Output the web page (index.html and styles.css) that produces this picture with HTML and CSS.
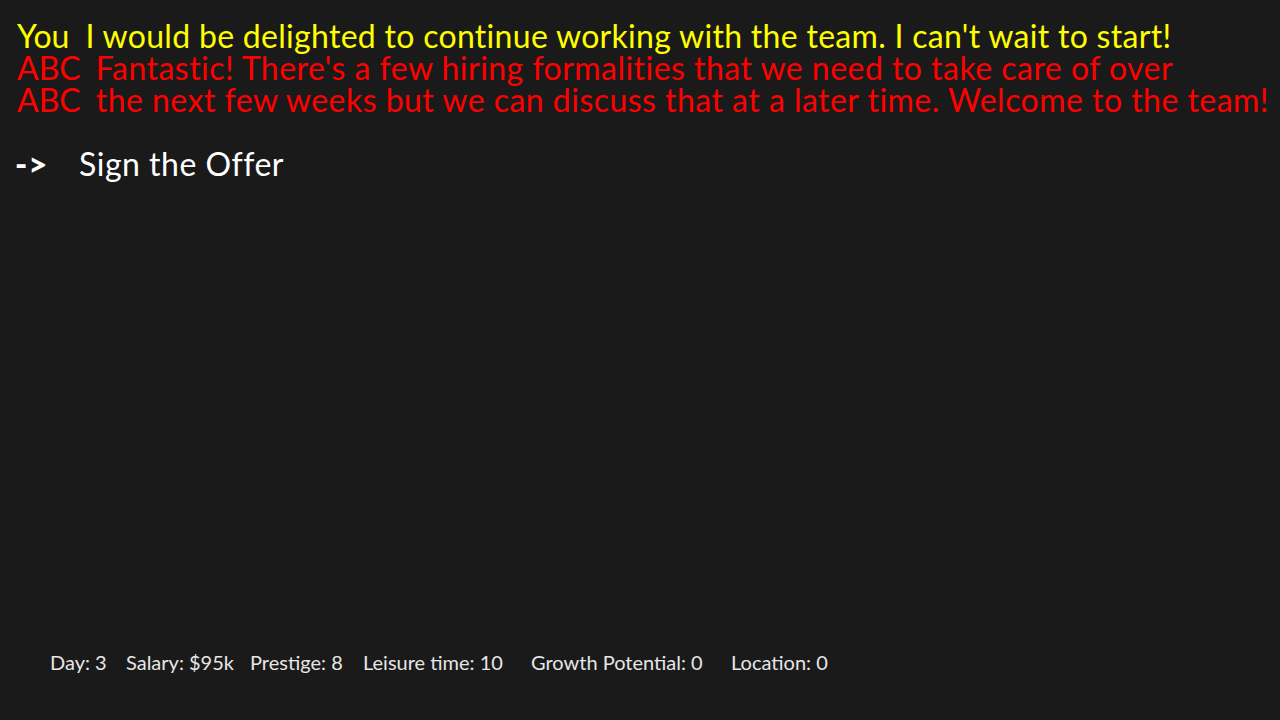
FILE: index.html
```html
<!DOCTYPE html>
<html>
<head>
<meta charset="utf-8">
<link rel="stylesheet" href="styles.css">
</head>
<body>
<div class="screen">
  <div class="dialog">
    <div class="line you"><span class="who">You</span><span class="msg">I would be delighted to continue working with the team. I can't wait to start!</span></div>
    <div class="line abc"><span class="who">ABC</span><span class="msg">Fantastic! There's a few hiring formalities that we need to take care of over</span></div>
    <div class="line abc"><span class="who">ABC</span><span class="msg">the next few weeks but we can discuss that at a later time. Welcome to the team!</span></div>
  </div>
  <div class="choices">
    <div class="choice"><span class="arrow">-&gt;</span><span class="label">Sign the Offer</span></div>
  </div>
  <div class="stats">
    <span class="stat s-day">Day: 3</span>
    <span class="stat s-salary">Salary: $95k</span>
    <span class="stat s-prestige">Prestige: 8</span>
    <span class="stat s-leisure">Leisure time: 10</span>
    <span class="stat s-growth">Growth Potential: 0</span>
    <span class="stat s-location">Location: 0</span>
  </div>
</div>
</body>
</html>
```
FILE: styles.css
```css
html, body {
  margin: 0;
  padding: 0;
  background: #1a1a1a;
}
.screen {
  min-height: 100vh;
  box-sizing: border-box;
  display: flex;
  flex-direction: column;
  font-family: "Lato", "Liberation Sans", sans-serif;
  padding: 20px 0 46px 0;
}
.dialog {
  padding-left: 17px;
}
.line {
  font-size: 32px;
  line-height: 32px;
  white-space: nowrap;
}
.you .msg { letter-spacing: 0.3px; }
.abc .msg { letter-spacing: 0.47px; }
.who {
  margin-right: 16px;
}
.abc .who {
  margin-right: 15px;
}
.you { color: #ffff00; }
.abc { color: #ff0000; }
.choices {
  margin-top: 31px;
}
.choice {
  display: flex;
  align-items: baseline;
  font-size: 32px;
  line-height: 32px;
  color: #ffffff;
}
.arrow {
  width: 64px;
  padding-left: 15px;
  font-weight: 900;
  font-size: 33px;
  letter-spacing: 1px;
}
.label {
  letter-spacing: 0.5px;
}
.stats {
  margin-top: auto;
  padding-left: 50px;
  display: grid;
  grid-template-columns: 76px 124px 113px 168px 200px auto;
  font-size: 20px;
  line-height: 24px;
  color: #e6e6e6;
}
```
